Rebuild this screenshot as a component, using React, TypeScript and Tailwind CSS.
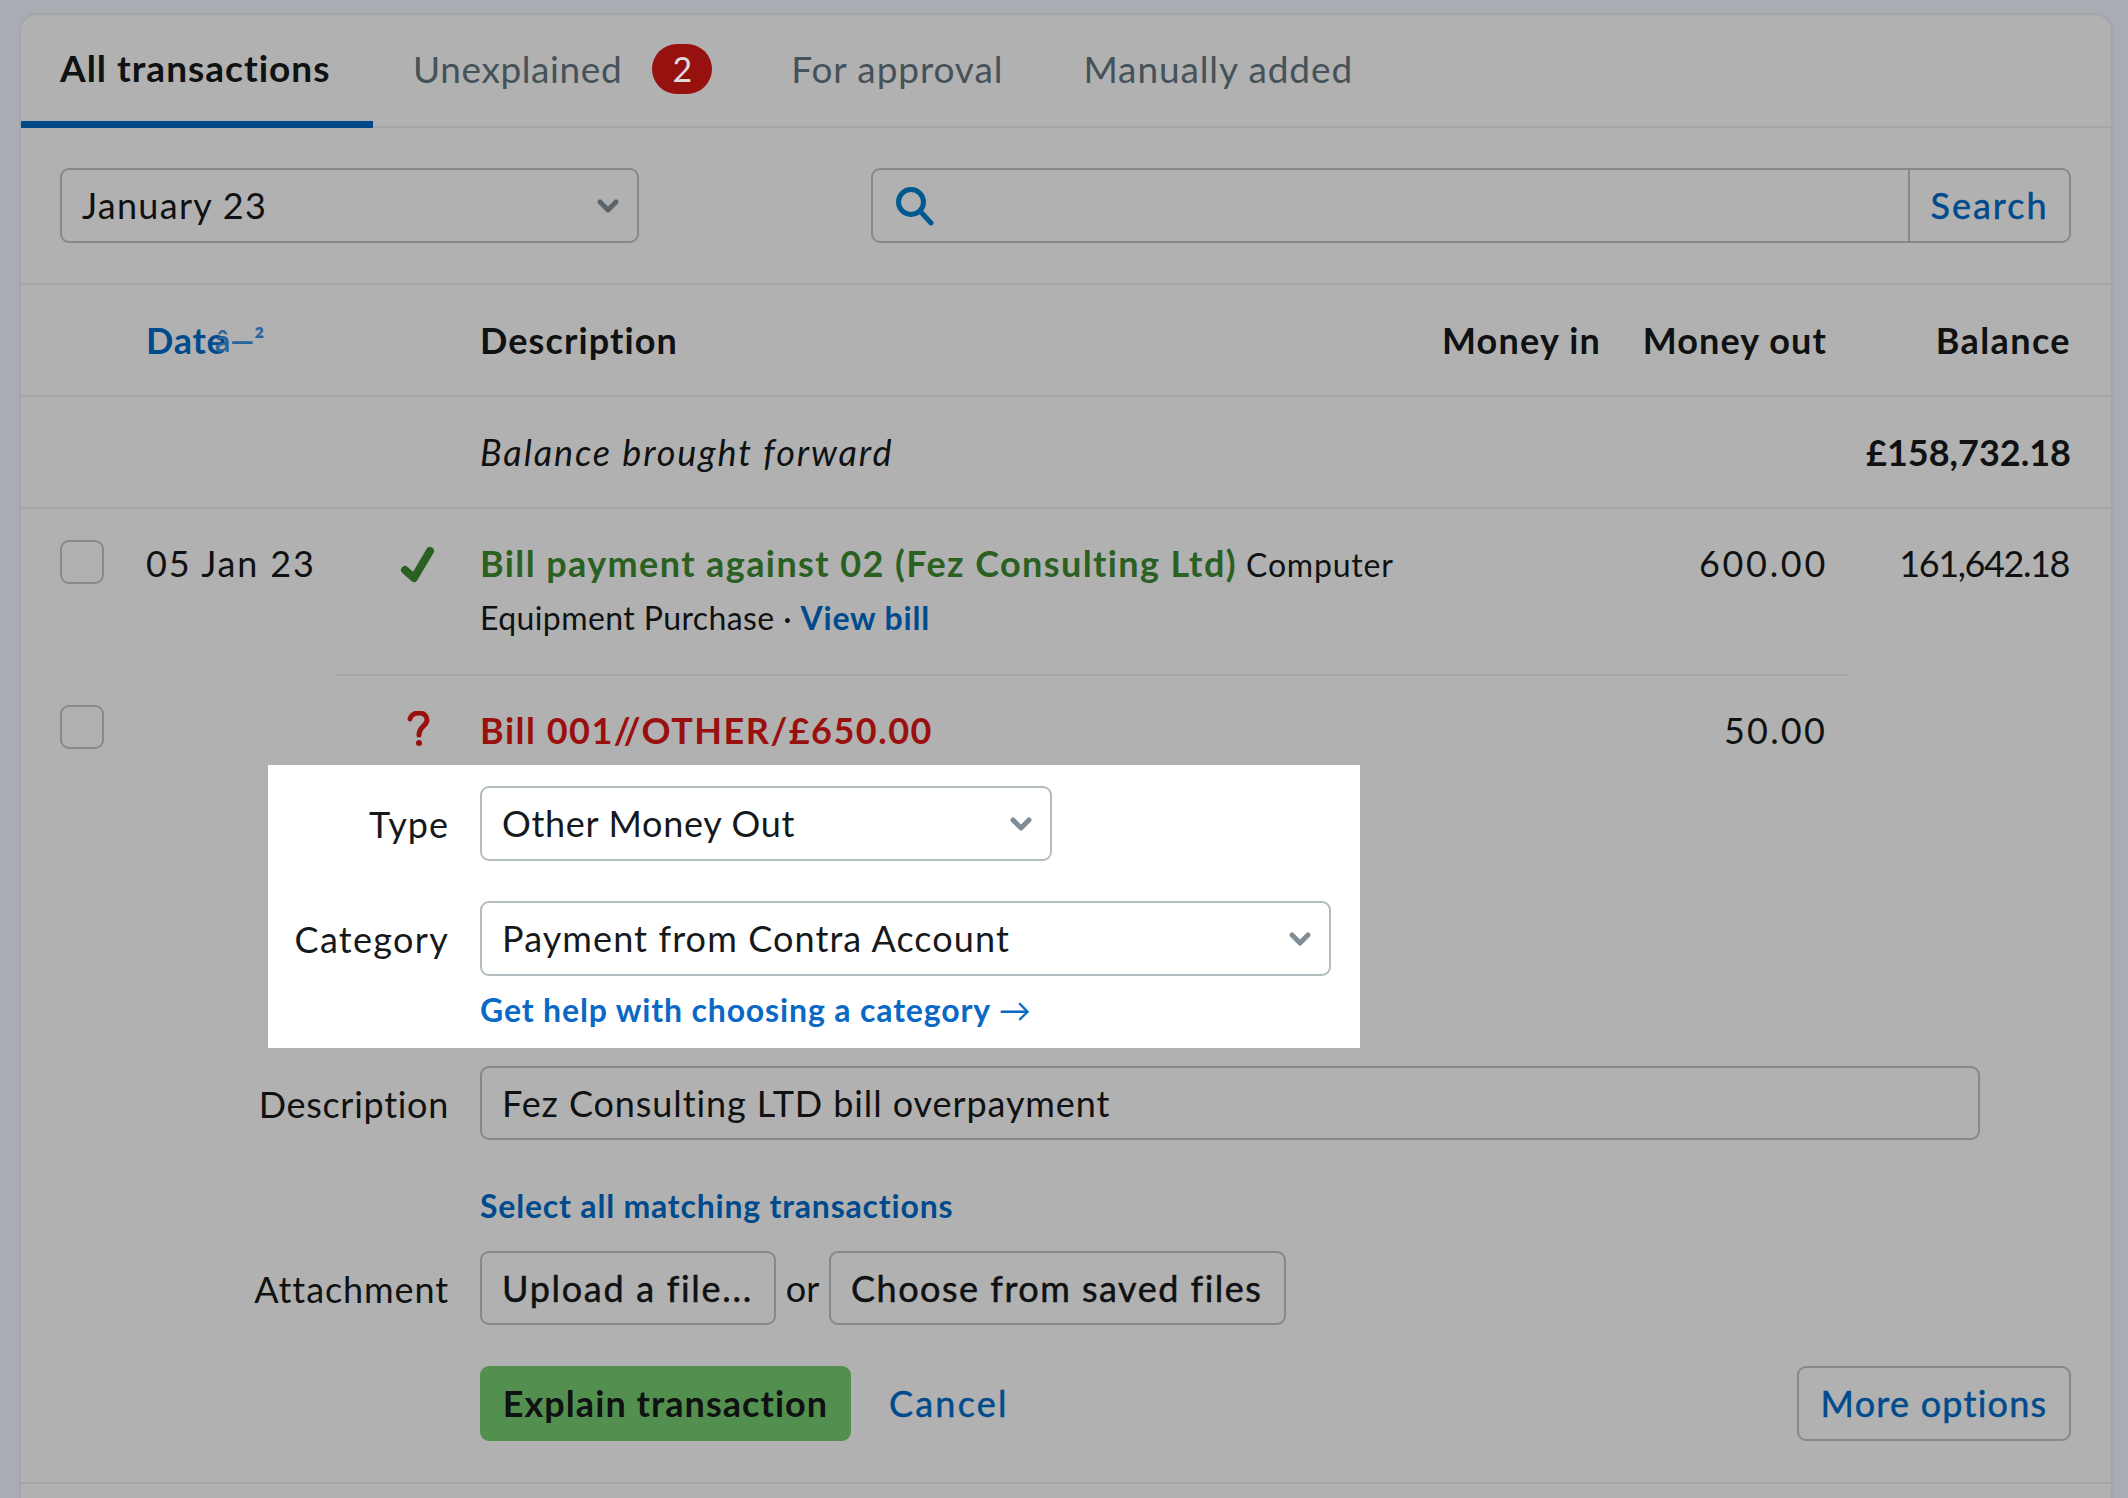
const rule = 'border-[#a3a5aa]'
const medium = '[-webkit-text-stroke:0.5px_currentColor]'

function Chevron({ color }: { color: string }) {
  return (
    <svg width="24" height="16" viewBox="0 0 24 16" fill="none" stroke={color} strokeWidth="5" strokeLinecap="round" strokeLinejoin="round">
      <path d="M4 4 L12 12 L20 4" />
    </svg>
  )
}

function Select({ value, width, tracking, light }: { value: string; width: string; tracking: string; light?: boolean }) {
  return (
    <div
      className={`flex h-[75px] items-center justify-between rounded-[9px] border-2 pl-[20px] pr-[17px] text-[36px] ${width} ${
        light ? 'border-[#b3bcc1] text-[#16191b]' : 'border-[#84898d] text-[#0f1112]'
      }`}
    >
      <span className={`pb-[2px] ${tracking}`}>{value}</span>
      <Chevron color={light ? '#7f8d97' : '#59646b'} />
    </div>
  )
}

function Checkbox({ className }: { className?: string }) {
  return <div className={`h-[44px] w-[44px] rounded-[9px] border-2 border-[#868b8f] ${className ?? ''}`} />
}

function FieldLabel({ children, tracking, light }: { children: string; tracking: string; light?: boolean }) {
  return (
    <div className={`flex w-[181px] shrink-0 justify-end whitespace-nowrap pt-[11px] text-[36px] ${tracking} ${light ? 'text-[#16191b]' : 'text-[#0f1112]'}`}>
      {children}
    </div>
  )
}

export default function App() {
  return (
    <div className="h-[1498px] w-[2128px] overflow-hidden bg-[#a9adb3] pl-[19px] pt-[13px] font-['Lato',sans-serif] text-[#0f1112]">
      <div className={`h-[1500px] w-[2094px] rounded-t-[18px] border-2 ${rule} bg-[#b1b1b1]`}>
        {/* Tabs */}
        <div className={`flex h-[113px] border-b-2 ${rule} text-[37px]`}>
          <div className="mb-[-2px] flex w-[352px] items-center border-b-[7px] border-[#004a8a] pl-[39px] font-bold tracking-[1px]">
            All transactions
          </div>
          <div className="flex items-center pb-[4px] pl-[40px] text-[#465259]">
            <span className="tracking-[0.6px]">Unexplained</span>
            <span className="ml-[30px] flex h-[50px] w-[60px] items-center justify-center rounded-full bg-[#97110f] text-[34px] text-[#dcdcdc]">
              2
            </span>
            <span className="ml-[79px] tracking-[0.9px]">For approval</span>
            <span className="ml-[80px] tracking-[0.9px]">Manually added</span>
          </div>
        </div>

        {/* Filters */}
        <div className={`flex h-[157px] items-center border-b-2 ${rule} pl-[39px] pr-[40px]`}>
          <Select value="January 23" width="w-[579px]" tracking="tracking-[1.3px]" />
          <div className="ml-[232px] flex h-[75px] flex-1 items-center rounded-[9px] border-2 border-[#84898d]">
            <svg className="ml-[22px]" width="40" height="40" viewBox="0 0 40 40" fill="none" stroke="#005a90" strokeWidth="5" strokeLinecap="round">
              <circle cx="16" cy="16" r="12.5" />
              <path d="M25 25 L36 37" />
            </svg>
            <div className={`ml-auto flex h-full w-[161px] items-center justify-center border-l-2 border-[#84898d] pb-[2px] text-[36px] tracking-[2px] text-[#004b8d] ${medium}`}>
              Search
            </div>
          </div>
        </div>

        {/* Table header */}
        <div className={`flex h-[112px] items-center border-b-2 ${rule} pl-[125px] pr-[40px] text-[36px] font-bold`}>
          <div className="relative w-[334px] tracking-[0.8px] text-[#004b8d]">
            Date
            <span className="absolute left-[69px] top-[12px] text-[30px] leading-none tracking-normal text-[#2a649e]">â—²</span>
          </div>
          <div className="w-[961px] tracking-[1.1px]">Description</div>
          <div className="w-[160px] text-right tracking-[1.2px]">Money in</div>
          <div className="w-[226px] text-right tracking-[1.1px]">Money out</div>
          <div className="w-[244px] text-right tracking-[1.4px]">Balance</div>
        </div>

        {/* Opening balance */}
        <div className={`flex h-[112px] items-center border-b-2 ${rule} pl-[459px] pr-[40px] text-[36px]`}>
          <div className="italic tracking-[1.9px]">Balance brought forward</div>
          <div className="ml-auto font-bold">£158,732.18</div>
        </div>

        {/* Explained row */}
        <div className="flex h-[165px] pl-[39px] pr-[40px] pt-[28px]">
          <div className="w-[86px] pt-[3px]">
            <Checkbox />
          </div>
          <div className="w-[249px] text-[36px] leading-[53px] tracking-[1.8px]">05 Jan 23</div>
          <div className="w-[85px] pl-[5px] pt-[9px]">
            <svg width="36" height="38" viewBox="0 0 36 38" fill="none" stroke="#2a6122" strokeWidth="8" strokeLinecap="round" strokeLinejoin="round">
              <path d="M5 24 L14 32 L30 5" />
            </svg>
          </div>
          <div className="w-[961px] text-[32px] leading-[53px] tracking-[0.8px]">
            <span className="text-[36px] font-bold tracking-[1.4px] text-[#2a6122]">Bill payment against 02 (Fez Consulting Ltd)</span>{' '}
            Computer <span className="tracking-[0.4px]">Equipment Purchase · </span>
            <span className="font-bold text-[#004b8d]">View bill</span>
          </div>
          <div className="ml-[160px] w-[226px] text-right text-[36px] leading-[53px] tracking-[2.7px]">
            <span className="mr-[-1px]">600.00</span>
          </div>
          <div className="w-[242px] text-right text-[36px] leading-[53px] tracking-[-1.4px]">161,642.18</div>
        </div>
        <div className={`ml-[314px] w-[1512px] border-b-2 ${rule}`} />

        {/* Row being explained */}
        <div className="flex pl-[39px] pr-[40px] pt-[29px] text-[36px] leading-[50px]">
          <div className="w-[86px]">
            <Checkbox />
          </div>
          <div className="w-[249px]" />
          <div className="w-[85px] pl-[12px] pt-[6px]">
            <svg width="24" height="36" viewBox="0 0 24 36" fill="none" stroke="#99100f" strokeWidth="5" strokeLinecap="round">
              <path d="M3 8 C4 4 8 2 12 2 C17 2 20 5 20 9 C20 15 12 15 12 24" />
              <circle cx="12" cy="32" r="3" fill="#99100f" stroke="none" />
            </svg>
          </div>
          <div className="w-[961px] font-bold tracking-[1.5px] text-[#99100f]">Bill 001//OTHER/£650.00</div>
          <div className="ml-[160px] w-[226px] text-right tracking-[2.2px]">50.00</div>
        </div>

        {/* Highlighted fields */}
        <div className="ml-[247px] mt-[10px] h-[283px] w-[1092px] bg-white pt-[21px]">
          <div className="flex gap-[31px]">
            <FieldLabel light tracking="tracking-[1px]">Type</FieldLabel>
            <Select value="Other Money Out" width="w-[572px]" tracking="tracking-[0.7px]" light />
          </div>
          <div className="mt-[40px] flex gap-[31px]">
            <FieldLabel light tracking="tracking-[1.3px]">Category</FieldLabel>
            <Select value="Payment from Contra Account" width="w-[851px]" tracking="tracking-[1.1px]" light />
          </div>
          <div className="ml-[212px] mt-[9px] text-[32px] font-bold leading-[50px] tracking-[0.85px] text-[#0a69c4]">
            Get help with choosing a category <span className="font-normal">→</span>
          </div>
        </div>

        <div className="ml-[247px] mt-[18px] flex gap-[31px]">
          <FieldLabel tracking="tracking-[0.7px]">Description</FieldLabel>
          <div className="flex h-[74px] w-[1500px] items-center rounded-[9px] border-2 border-[#84898d] pl-[20px] text-[36px] tracking-[0.9px]">
            Fez Consulting LTD bill overpayment
          </div>
        </div>

        <div className="ml-[459px] mt-[41px] text-[32px] font-bold leading-[50px] tracking-[0.8px] text-[#004b8d]">
          Select all matching transactions
        </div>

        <div className="ml-[247px] mt-[20px] flex gap-[31px]">
          <FieldLabel tracking="tracking-[0.9px]">Attachment</FieldLabel>
          <div className="flex items-center text-[36px]">
            <div className={`flex h-[74px] w-[296px] items-center rounded-[9px] border-2 border-[#84898d] pl-[20px] tracking-[1.7px] ${medium}`}>
              Upload a file...
            </div>
            <span className="w-[53px] text-center">or</span>
            <div className={`flex h-[74px] w-[457px] items-center rounded-[9px] border-2 border-[#84898d] pl-[20px] tracking-[1.5px] ${medium}`}>
              Choose from saved files
            </div>
          </div>
        </div>

        <div className={`mt-[41px] flex h-[118px] items-start border-b-2 ${rule} pl-[459px] pr-[40px] text-[36px]`}>
          <div className="flex h-[75px] w-[371px] items-center justify-center rounded-[9px] bg-[#53904f] pb-[2px] font-bold tracking-[1.05px]">
            Explain transaction
          </div>
          <div className={`ml-[38px] flex h-[75px] items-center pb-[2px] tracking-[2.2px] text-[#004b8d] ${medium}`}>Cancel</div>
          <div className={`ml-auto flex h-[75px] w-[274px] items-center justify-center rounded-[9px] border-2 border-[#84898d] pb-[2px] tracking-[1.25px] text-[#004b8d] ${medium}`}>
            More options
          </div>
        </div>
      </div>
    </div>
  )
}
